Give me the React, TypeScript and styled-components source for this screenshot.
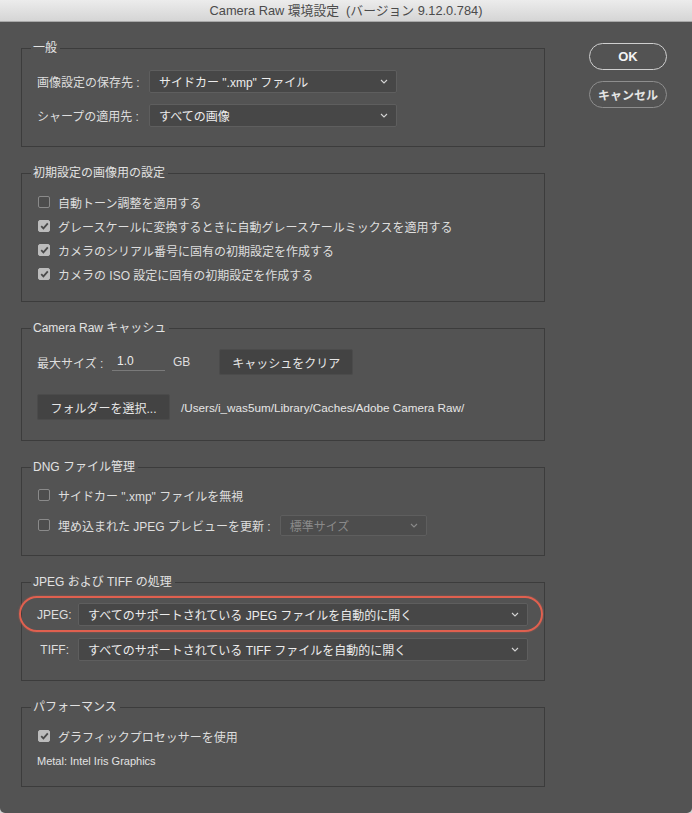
import styled, { createGlobalStyle } from 'styled-components'

const colors = {
  window: '#535353',
  groupBorder: '#3c3c3c',
  text: '#dedede',
  selectBg: '#474747',
  selectBorder: '#5e5e5e',
  buttonBg: '#434343',
  dim: '#8c8c8c',
  mark: '#e0604f',
}

const font = `"Liberation Sans", "Noto Sans CJK JP", sans-serif`

const GlobalStyle = createGlobalStyle`
  html, body {
    margin: 0;
    padding: 0;
    background: #d4d4d4;
  }
  body {
    font-family: ${font};
    -webkit-font-smoothing: antialiased;
  }
`

const Window = styled.div`
  width: 692px;
  height: 813px;
  background: ${colors.window};
  border-radius: 0 0 5px 5px;
  overflow: hidden;
  color: ${colors.text};
  font-size: 12px;
`

const TitleBar = styled.div`
  height: 21px;
  border-bottom: 1px solid #a8a8a8;
  background: linear-gradient(#ececec, #d5d5d5);
  color: #4b4b4b;
  font-size: 12.8px;
  line-height: 21px;
  text-align: center;
  white-space: pre;
`

const Content = styled.div`
  display: flex;
  align-items: flex-start;
  gap: 44px;
  padding: 18px 0 0 21px;
`

const Groups = styled.div`
  width: 524px;
  display: flex;
  flex-direction: column;
  gap: 18px;
`

const Group = styled.fieldset<{ $top: number; $bottom: number; $gap?: number }>`
  margin: 0;
  min-width: 0;
  border: 1px solid ${colors.groupBorder};
  padding: ${({ $top, $bottom }) => `${$top}px 16px ${$bottom}px 15px`};
  display: flex;
  flex-direction: column;
  gap: ${({ $gap }) => $gap ?? 0}px;
`

const Legend = styled.legend`
  margin-left: -6px;
  padding: 0 3px 0 2px;
  font-size: 12px;
  line-height: 16px;
  color: #e2e2e2;
`

const Row = styled.div<{ $h: number }>`
  position: relative;
  display: flex;
  align-items: center;
  height: ${({ $h }) => $h}px;
  white-space: nowrap;
`

const Label = styled.span<{ $w?: number; $right?: boolean; $ml?: number }>`
  flex: none;
  width: ${({ $w }) => ($w ? `${$w}px` : 'auto')};
  margin-left: ${({ $ml }) => $ml ?? 0}px;
  text-align: ${({ $right }) => ($right ? 'right' : 'left')};
`

const SelectBox = styled.div<{ $w?: number; $h?: number; $disabled?: boolean; $ml?: number }>`
  flex: ${({ $w }) => ($w ? 'none' : '1')};
  width: ${({ $w }) => ($w ? `${$w}px` : 'auto')};
  height: ${({ $h }) => $h ?? 23}px;
  margin-left: ${({ $ml }) => $ml ?? 0}px;
  box-sizing: border-box;
  display: flex;
  align-items: center;
  justify-content: space-between;
  padding: 0 8px 0 9px;
  background: ${({ $disabled }) => ($disabled ? '#4d4d4d' : colors.selectBg)};
  border: 1px solid ${colors.selectBorder};
  border-radius: 2px;
  color: ${({ $disabled }) => ($disabled ? '#8a8a8a' : '#ececec')};
  font-size: 12px;
`

const Chevron = ({ dim }: { dim?: boolean }) => (
  <svg width="8" height="5" viewBox="0 0 8 5">
    <path d="M1 1l3 3 3-3" fill="none" stroke={dim ? '#8a8a8a' : '#d4d4d4'} strokeWidth="1.1" />
  </svg>
)

const Select = ({
  value,
  width,
  height,
  disabled,
  ml,
}: {
  value: string
  width?: number
  height?: number
  disabled?: boolean
  ml?: number
}) => (
  <SelectBox $w={width} $h={height} $disabled={disabled} $ml={ml}>
    <span>{value}</span>
    <Chevron dim={disabled} />
  </SelectBox>
)

const Box = styled.span<{ $checked?: boolean }>`
  flex: none;
  width: 12px;
  height: 12px;
  margin: 0 8px 0 1px;
  box-sizing: border-box;
  border-radius: 2px;
  display: flex;
  align-items: center;
  justify-content: center;
  background: ${({ $checked }) => ($checked ? '#bcbcbc' : '#4d4d4d')};
  border: 1px solid ${({ $checked }) => ($checked ? '#bcbcbc' : '#8a8a8a')};
`

const Check = ({ label, checked }: { label: string; checked?: boolean }) => (
  <>
    <Box $checked={checked}>
      {checked && (
        <svg width="9" height="8" viewBox="0 0 9 8">
          <path d="M1.2 4.2l2.2 2.2L7.8 1.4" fill="none" stroke="#4a4a4a" strokeWidth="1.8" />
        </svg>
      )}
    </Box>
    <span>{label}</span>
  </>
)

const TextField = styled.span`
  flex: none;
  width: 53px;
  height: 18px;
  box-sizing: border-box;
  padding-left: 5px;
  border-bottom: 1px solid #7a7a7a;
  line-height: 16px;
  color: #ececec;
`

const Button = styled.span<{ $w: number; $ml?: number }>`
  flex: none;
  width: ${({ $w }) => $w}px;
  height: 26px;
  margin-left: ${({ $ml }) => $ml ?? 0}px;
  box-sizing: border-box;
  display: flex;
  align-items: center;
  justify-content: center;
  background: ${colors.buttonBg};
  border: 1px solid #4b4b4b;
  border-radius: 2px;
  color: #e6e6e6;
`

const Path = styled.span`
  margin-left: 11px;
  font-size: 11.7px;
  color: #e6e6e6;
`

const Small = styled.span`
  font-size: 11px;
  color: #e2e2e2;
`

const Highlight = styled.span`
  position: absolute;
  inset: -7px -15px -6px -18px;
  border: 2px solid ${colors.mark};
  border-radius: 20px;
  box-shadow: 0 0 2px rgba(224, 96, 79, 0.6);
  pointer-events: none;
`

const Side = styled.div`
  margin-top: 3px;
  display: flex;
  flex-direction: column;
  gap: 11px;
`

const Pill = styled.span<{ $primary?: boolean }>`
  width: 78px;
  height: 27px;
  box-sizing: border-box;
  display: flex;
  align-items: center;
  justify-content: center;
  border-radius: 14px;
  border: 1.5px solid ${({ $primary }) => ($primary ? '#cfcfcf' : '#8e8e8e')};
  color: ${({ $primary }) => ($primary ? '#f4f4f4' : '#e4e4e4')};
  font-size: ${({ $primary }) => ($primary ? 13 : 12)}px;
  font-weight: bold;
`

const App = () => (
  <>
    <GlobalStyle />
    <Window>
      <TitleBar>{'Camera Raw 環境設定  (バージョン 9.12.0.784)'}</TitleBar>
      <Content>
        <Groups>
          <Group $top={14} $bottom={19} $gap={11}>
            <Legend>{'一般'}</Legend>
            <Row $h={23}>
              <Label $w={112}>{'画像設定の保存先 :'}</Label>
              <Select value={'サイドカー ".xmp" ファイル'} width={248} />
            </Row>
            <Row $h={23}>
              <Label $w={112}>{'シャープの適用先 :'}</Label>
              <Select value={'すべての画像'} width={248} />
            </Row>
          </Group>

          <Group $top={9} $bottom={15}>
            <Legend>{'初期設定の画像用の設定'}</Legend>
            <Row $h={24}>
              <Check label={'自動トーン調整を適用する'} />
            </Row>
            <Row $h={24}>
              <Check checked label={'グレースケールに変換するときに自動グレースケールミックスを適用する'} />
            </Row>
            <Row $h={24}>
              <Check checked label={'カメラのシリアル番号に固有の初期設定を作成する'} />
            </Row>
            <Row $h={24}>
              <Check checked label={'カメラの ISO 設定に固有の初期設定を作成する'} />
            </Row>
          </Group>

          <Group $top={13} $bottom={20} $gap={19}>
            <Legend>{'Camera Raw キャッシュ'}</Legend>
            <Row $h={26}>
              <Label $w={75}>{'最大サイズ :'}</Label>
              <TextField>{'1.0'}</TextField>
              <Label $ml={8}>{'GB'}</Label>
              <Button $w={134} $ml={29}>
                {'キャッシュをクリア'}
              </Button>
            </Row>
            <Row $h={26}>
              <Button $w={133}>{'フォルダーを選択...'}</Button>
              <Path>{'/Users/i_was5um/Library/Caches/Adobe Camera Raw/'}</Path>
            </Row>
          </Group>

          <Group $top={8} $bottom={18} $gap={6}>
            <Legend>{'DNG ファイル管理'}</Legend>
            <Row $h={24}>
              <Check label={'サイドカー ".xmp" ファイルを無視'} />
            </Row>
            <Row $h={24}>
              <Check label={'埋め込まれた JPEG プレビューを更新 :'} />
              <Select value={'標準サイズ'} width={147} height={21} disabled ml={9} />
            </Row>
          </Group>

          <Group $top={13} $bottom={19} $gap={12}>
            <Legend>{'JPEG および TIFF の処理'}</Legend>
            <Row $h={23}>
              <Label $w={32} $right>
                {'JPEG:'}
              </Label>
              <Select value={'すべてのサポートされている JPEG ファイルを自動的に開く'} ml={9} />
              <Highlight />
            </Row>
            <Row $h={23}>
              <Label $w={32} $right>
                {'TIFF:'}
              </Label>
              <Select value={'すべてのサポートされている TIFF ファイルを自動的に開く'} ml={9} />
            </Row>
          </Group>

          <Group $top={9} $bottom={15} $gap={3}>
            <Legend>{'パフォーマンス'}</Legend>
            <Row $h={24}>
              <Check checked label={'グラフィックプロセッサーを使用'} />
            </Row>
            <Row $h={20}>
              <Small>{'Metal: Intel Iris Graphics'}</Small>
            </Row>
          </Group>
        </Groups>

        <Side>
          <Pill $primary>{'OK'}</Pill>
          <Pill>{'キャンセル'}</Pill>
        </Side>
      </Content>
    </Window>
  </>
)

export default App
